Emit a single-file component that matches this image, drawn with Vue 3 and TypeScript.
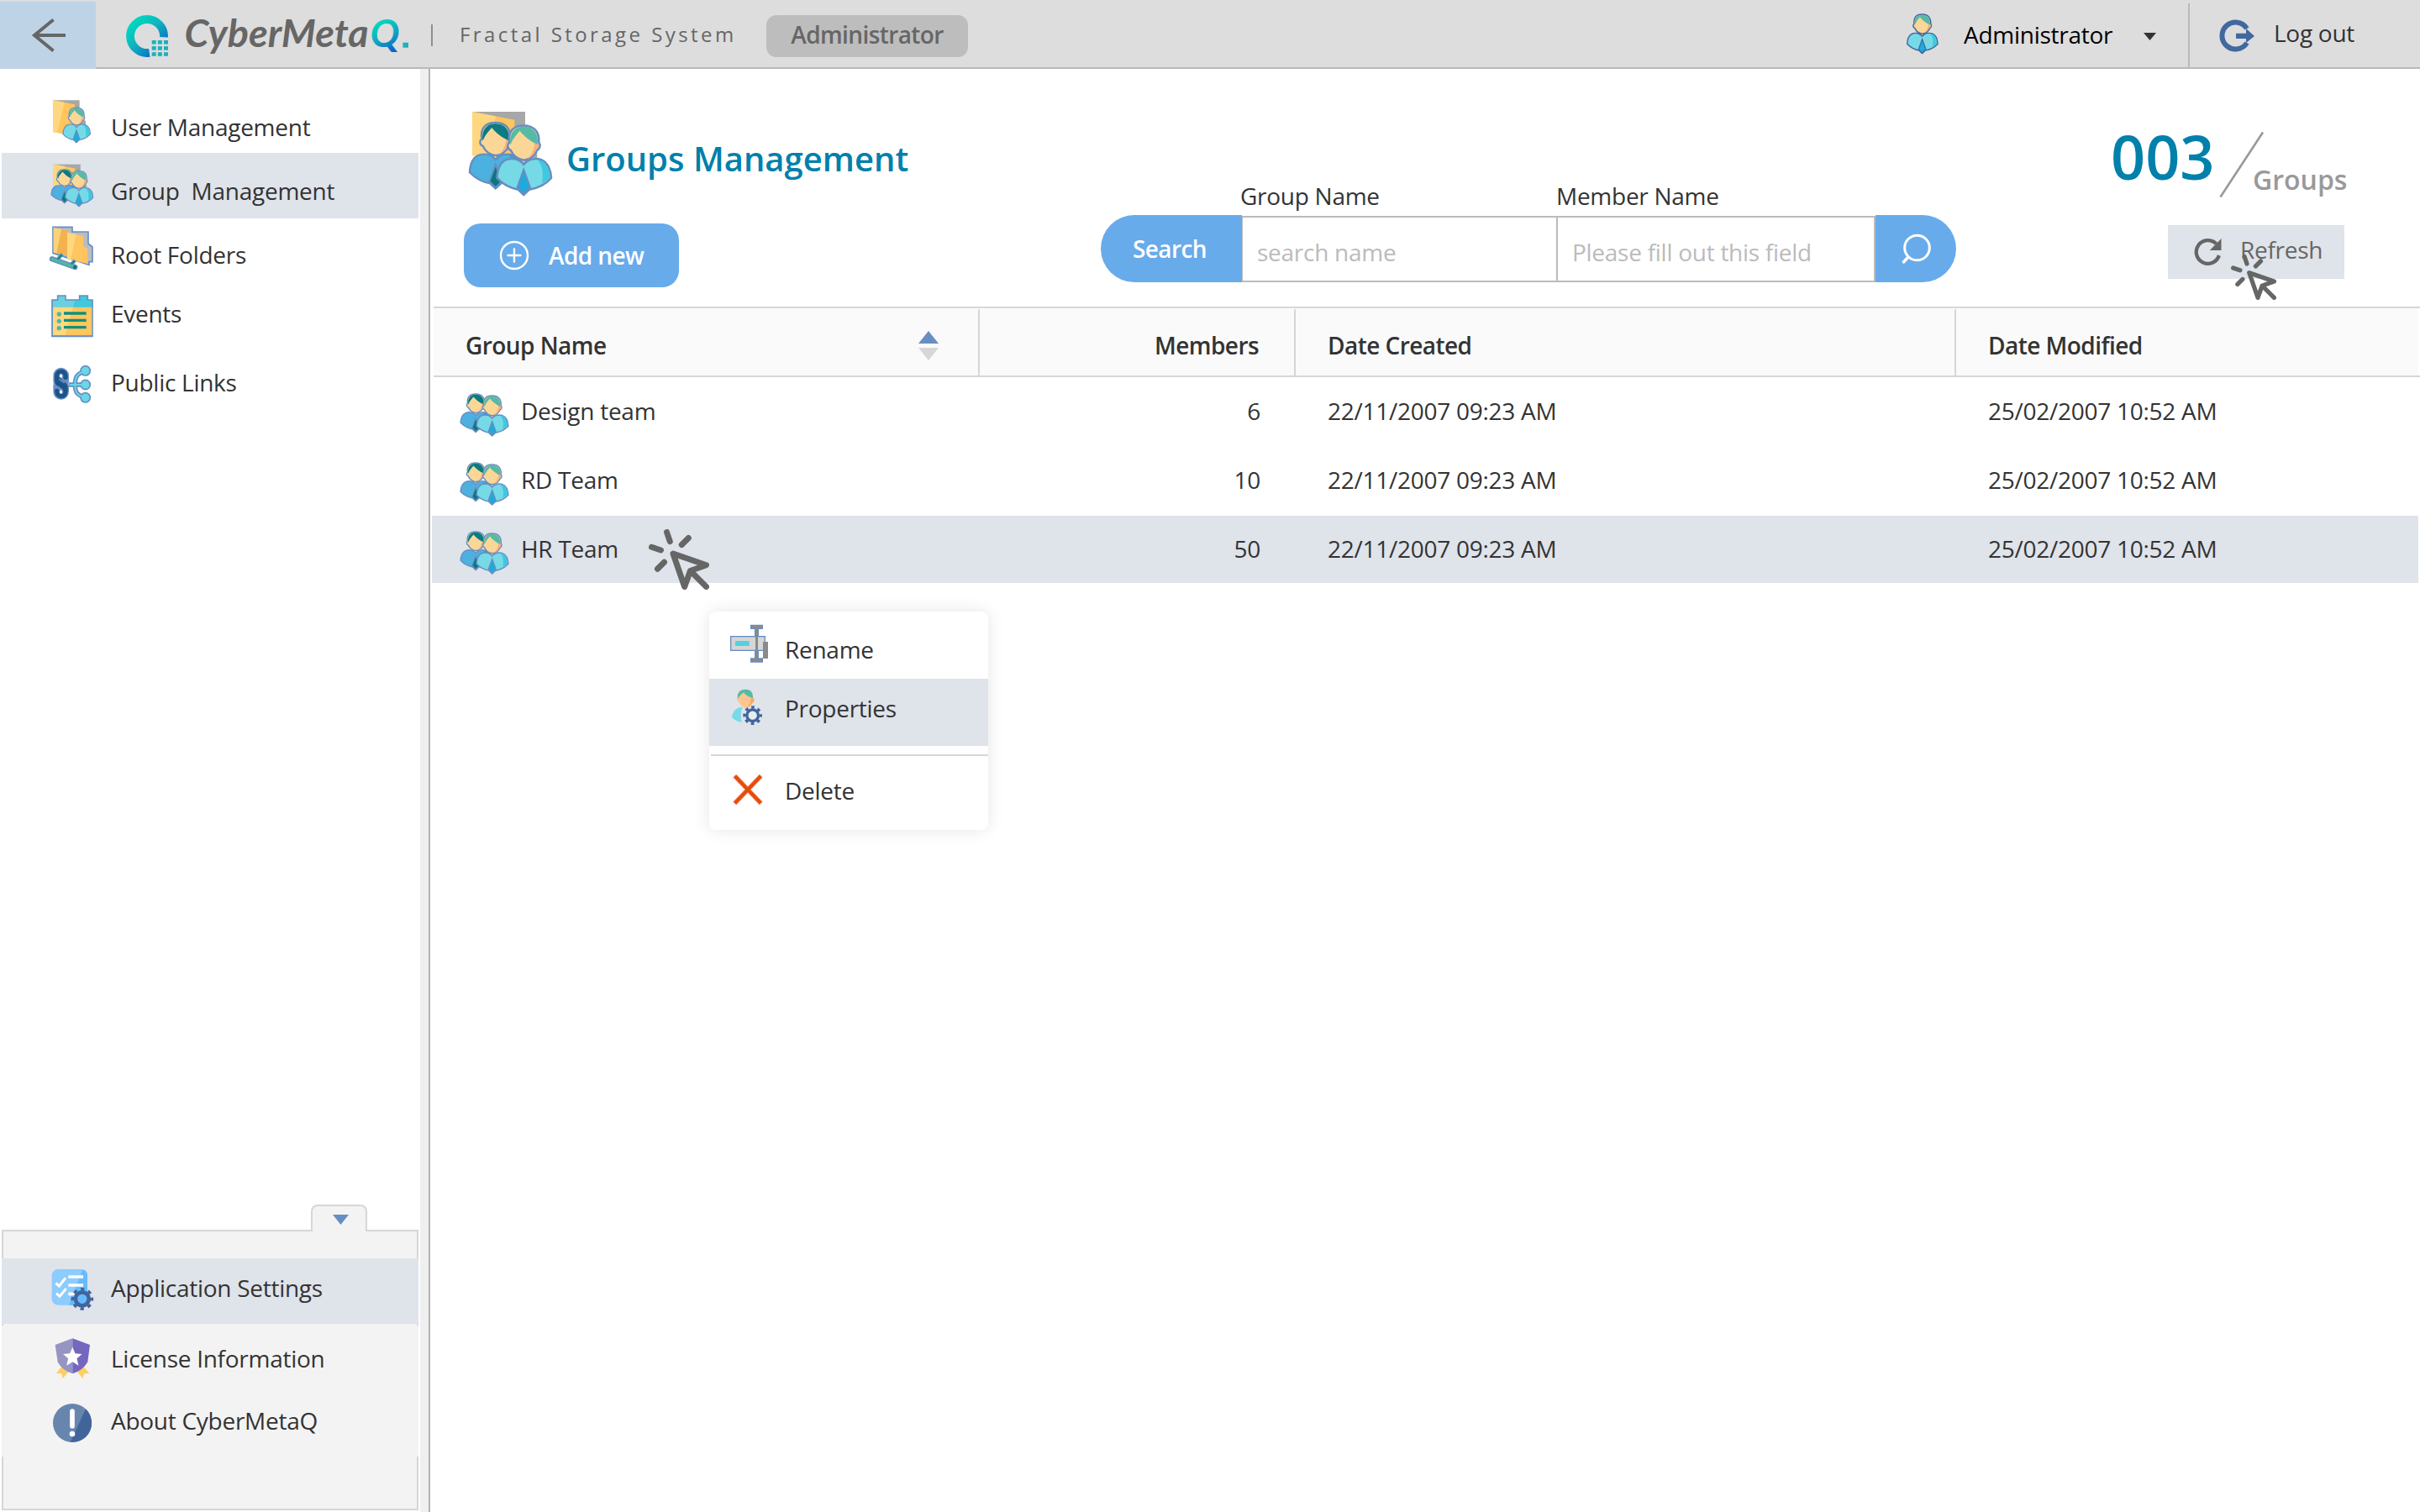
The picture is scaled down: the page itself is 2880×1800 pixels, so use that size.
<script setup lang="ts">
interface NavItem {
  id: string
  label: string
  viewBox: string
  active?: boolean
}

interface GroupRow {
  name: string
  members: number
  created: string
  modified: string
  selected?: boolean
}

const navItems: NavItem[] = [
  { id: 'users', label: 'User Management', viewBox: '168 12 180 234' },
  { id: 'groups', label: 'Group  Management', viewBox: '168 246 180 234', active: true },
  { id: 'roots', label: 'Root Folders', viewBox: '168 480 180 234' },
  { id: 'events', label: 'Events', viewBox: '168 714 180 234' },
  { id: 'links', label: 'Public Links', viewBox: '168 948 180 234' },
]

const footerItems: NavItem[] = [
  { id: 'settings', label: 'Application Settings', viewBox: '168 294 180 234', active: true },
  { id: 'license', label: 'License Information', viewBox: '168 534 180 234' },
  { id: 'about', label: 'About CyberMetaQ', viewBox: '168 768 180 234' },
]

const rows: GroupRow[] = [
  { name: 'Design team', members: 6, created: '22/11/2007 09:23 AM', modified: '25/02/2007 10:52 AM' },
  { name: 'RD Team', members: 10, created: '22/11/2007 09:23 AM', modified: '25/02/2007 10:52 AM' },
  { name: 'HR Team', members: 50, created: '22/11/2007 09:23 AM', modified: '25/02/2007 10:52 AM', selected: true },
]

const logoDots = [0, 1, 2].flatMap((r) => [0, 1, 2].map((c) => ({ x: 30.7 + c * 7.15, y: 30 + r * 7.1 })))
</script>

<template>
  <div class="app">
    <!-- Shared drawings -->
    <svg class="defs" aria-hidden="true">
      <symbol id="person" viewBox="32 0 69 90">
        <g id="person-art">
          <path
            d="M65.7 51 C61 44 52 42.500 45 45 C37 48 34 58 33.500 67 C42 76 51 79.500 59 81 L65.700 87.500 L72.500 81 C82 79.500 91 76 99 67 C98.500 58 95 48 87 45 C80 42.500 71 44 65.700 51Z"
            fill="var(--body)" stroke="currentColor" stroke-width="2.600" stroke-linejoin="round" />
          <path d="M82 45 C89 52 90 62 87.500 73 C92 71 95.500 69 97.500 66.500 C97 58 94 49 87 46Z" fill="var(--shade)" />
          <path d="M65.700 57 L58 78.500 L65.700 86.500 L73.500 78.500Z" fill="var(--tie)" stroke="currentColor" stroke-width="2.200" />
          <path d="M61 44 h9 l-4.300 6z" fill="#fbd797" stroke="currentColor" stroke-width="1.500" />
          <path
            d="M48.500 24 C46.500 11 53 3.700 65.500 3.700 C78 3.700 85 11 84 24 C86.500 27 85.500 31.500 82 33.500 C79 40 73 44.500 66 45.500 C59 44.500 53 40 50 33.500 C45.500 31.500 45.500 27 48.500 24Z"
            fill="#fbd797" stroke="currentColor" stroke-width="2.600" />
          <path d="M83 25 C85 28 84 31 81 32.500 C78.500 38 75 42 70 44.200 C76 38 79 31 78.500 24Z" fill="#fbb07d" />
          <path d="M50 27 C48.300 20 50 5 65.700 5 C78 5 84 14 82.500 26.500 C74 23 66 16.500 61 10 C57 15 52 20 50 27Z" fill="var(--hair)" />
        </g>
      </symbol>
      <symbol id="people" viewBox="-1.500 -1.500 102.500 91" preserveAspectRatio="none">
        <use href="#person-art" class="back" transform="matrix(.97 0 0 .95 -32 -3.300)" />
        <use href="#person-art" class="front" />
      </symbol>
      <symbol id="folder" viewBox="3.700 -13 80 56">
        <path d="M3.700 -13 H67.500 V26 L82 36 V43 H40Z" fill="#a7a7a7" />
        <path d="M3.700 -13 L54.700 -3 V40 H3.700Z" fill="#ffc55f" />
        <path d="M3.700 -13 L32 -7.500 L20 40 H3.700Z" fill="#ffd77f" />
      </symbol>
      <symbol id="click" viewBox="0 0 72 72">
        <g fill="none" stroke="#666" stroke-width="7" stroke-linecap="round" stroke-linejoin="round">
          <path d="M21.500 3.500 L25.300 14.700 M47.300 10.500 L39.300 18.500 M3.500 21.300 L14.500 25 M18.500 39.300 L10.500 47.300" />
          <path d="M29 29 L68.500 42.700 L49.500 49.500 L42.700 68.500Z M51 51 L68.500 68.500" />
        </g>
      </symbol>
    </svg>

    <header class="topbar">
      <button class="back-btn">
        <svg width="114" height="80" viewBox="0 2 114 80">
          <path d="M63.500 23.500 L41 42 L63.500 60.500 M40 42 H78" fill="none" stroke="#666" stroke-width="4" />
        </svg>
      </button>
      <div class="topbar-main">
        <div class="brand">
          <svg width="350" height="80" viewBox="0 -18 350 80">
            <defs>
              <linearGradient id="ring" gradientUnits="userSpaceOnUse" x1="8" y1="8" x2="40" y2="42">
                <stop offset="0" stop-color="#00d8be" />
                <stop offset=".45" stop-color="#10b4bf" />
                <stop offset="1" stop-color="#0a6cc8" />
              </linearGradient>
              <linearGradient id="qfill" gradientUnits="userSpaceOnUse" x1="298" y1="8" x2="318" y2="44">
                <stop offset="0" stop-color="#00dcc0" />
                <stop offset=".5" stop-color="#10a6c4" />
                <stop offset="1" stop-color="#0a62cc" />
              </linearGradient>
            </defs>
            <path d="M45 26.300 A20 20 0 1 0 27.800 44.800" fill="none" stroke="url(#ring)" stroke-width="9.800" />
            <rect v-for="(d, i) in logoDots" :key="i" :x="d.x" :y="d.y" width="5" height="4.600" fill="#1fb0bb" />
            <text x="69.500" y="38" class="brand-text" textLength="219.200" lengthAdjust="spacingAndGlyphs">CyberMeta</text>
            <text x="290.500" y="38" class="brand-q" fill="url(#qfill)">Q</text>
            <rect x="329.400" y="32.700" width="6.600" height="6" fill="#1fb0bb" />
          </svg>
        </div>
        <span class="brand-sep"></span>
        <span class="product">Fractal Storage System</span>
        <span class="role">Administrator</span>
        <div class="account">
          <svg class="front dark-line" width="40" height="50"><use href="#person" width="40" height="50" /></svg>
          <span class="account-name">Administrator</span>
          <svg class="caret" width="15" height="9" viewBox="0 0 15 9"><path d="M0 0H15L7.500 9Z" fill="#333" /></svg>
        </div>
        <div class="logout">
          <svg width="44" height="40" viewBox="2640 22 44 40">
            <path d="M2674 34 A16 16 0 1 0 2674 51" fill="none" stroke="#41689f" stroke-width="6" />
            <path d="M2661 39.700 H2673 V34 L2683 43 L2673 51 V46 H2661Z" fill="#41689f" />
          </svg>
          <span>Log out</span>
        </div>
      </div>
    </header>

    <div class="body">
      <aside class="sidebar">
        <nav class="nav">
          <a v-for="item in navItems" :key="item.id" class="nav-item" :class="[item.id, { active: item.active }]">
            <svg width="60" height="78" :viewBox="item.viewBox">
              <template v-if="item.id === 'users'">
                <path d="M190 58H284V118L306 132V170H230Z" fill="#a7a7a7" />
                <path d="M190 58L267 73V186L190 172Z" fill="#ffc55f" />
                <path d="M190 58L230 66L204 175L190 172Z" fill="#ffd77f" />
                <use href="#person" class="front" x="221" y="79" width="106" height="134" />
              </template>
              <template v-else-if="item.id === 'groups'">
                <use href="#folder" x="190" y="286" width="122" height="86" />
                <use href="#people" x="180" y="302" width="155" height="138" />
              </template>
              <template v-else-if="item.id === 'roots'">
                <path d="M189 511H258V528H315V570L330 582V635H318V646L189 604Z" fill="#b9bcc2" stroke="#678ec2" stroke-width="5" />
                <path d="M191 513L242 524V612L191 602Z" fill="#f2b34e" />
                <path d="M191 513L219 519L202 604L191 602Z" fill="#fbd27a" />
                <path d="M240 530L298 543V578L313 590V642L240 626Z" fill="#ffc55f" />
                <path d="M240 530L272 537L252 628L240 626Z" fill="#ffd77f" />
                <path d="M206 626L222 608M254 644L268 630" stroke="#678ec2" stroke-width="13" />
                <path d="M186 625L268 654" stroke="#678ec2" stroke-width="19" stroke-linecap="round" />
                <path d="M206 626L222 609M254 644L267 631" stroke="#148f77" stroke-width="6" />
                <path d="M186 625L268 654" stroke="#4dbb9f" stroke-width="9" stroke-linecap="round" />
                <circle cx="267" cy="654" r="6" fill="#0b6f78" />
              </template>
              <template v-else-if="item.id === 'events'">
                <path d="M186 771H206V756H234V771H284V756H313V771H330V901H186Z" fill="#3ec9de" stroke="#678ec2" stroke-width="5" />
                <path d="M189 797H328V897H189Z" fill="#ffc55f" />
                <path d="M189 774H209V759H232V774H268L261 797H189Z" fill="#6bd0dd" />
                <path d="M189 797H261L233 897H189Z" fill="#ffd77f" />
                <g fill="#4db8a5"><circle cx="211" cy="822" r="8" /><circle cx="211" cy="847" r="8" /><circle cx="211" cy="872" r="8" /></g>
                <path d="M228 819H308M228 844H308M228 869H308" stroke="#148f77" stroke-width="10" />
              </template>
              <template v-else>
                <path d="M246 1074H300M302 1027C276 1034 268 1045 268 1074C268 1104 278 1112 302 1118" fill="none" stroke="#678ec2" stroke-width="16" />
                <g fill="#68d7e6" stroke="#678ec2" stroke-width="5">
                  <circle cx="305" cy="1024" r="17" /><circle cx="305" cy="1074" r="17" /><circle cx="305" cy="1120" r="17" />
                </g>
                <path d="M248 1074H300M302 1027C276 1034 268 1045 268 1074C268 1104 278 1112 302 1118" fill="none" stroke="#68d7e6" stroke-width="6" />
                <g fill="none" stroke="#678ec2" stroke-width="26">
                  <rect x="203" y="1026" width="30" height="50" rx="15" /><rect x="203" y="1064" width="30" height="50" rx="15" />
                </g>
                <g fill="none" stroke="#1d5488" stroke-width="16" stroke-linecap="round">
                  <path d="M234 1048V1042C234 1021 203 1021 203 1042V1060C203 1080 230 1074 233 1092" />
                  <path d="M203 1096C203 1121 234 1121 234 1098V1082C232 1066 214 1070 212 1056" />
                </g>
                <path d="M206 1080C212 1088 222 1088 224 1100M212 1052C212 1060 224 1060 230 1068" fill="none" stroke="#678ec2" stroke-width="5" />
                <path d="M217 1035l5 5v7h-9v-7zM217 1093l5 6v6h-9v-7z" fill="#fff" />
              </template>
            </svg>
            <span class="nav-label">{{ item.label }}</span>
          </a>
        </nav>

        <div class="dock">
          <div class="dock-tab">
            <svg width="19" height="12" viewBox="0 0 19 12"><path d="M0 0H19L9.500 12Z" fill="#678ec2" /></svg>
          </div>
          <a v-for="item in footerItems" :key="item.id" class="nav-item" :class="[item.id, { active: item.active }]">
            <svg width="60" height="78" :viewBox="item.viewBox">
              <template v-if="item.id === 'settings'">
                <rect x="185" y="333" width="127" height="128" rx="22" fill="#8cccff" />
                <path d="M295 334Q312 338 312 356V461H246Z" fill="#66bbff" />
                <path d="M244 360H297M244 390H297M244 421H266" stroke="#fff" stroke-width="11" />
                <path d="M199 382L211 393L234 364M201 419L213 430L236 402" fill="none" stroke="#fff" stroke-width="9" />
                <circle cx="293.500" cy="439" r="35" fill="none" stroke="#41659b" stroke-width="10" stroke-dasharray="13 14.490" stroke-dashoffset="6.500" />
                <circle cx="293.500" cy="439" r="24" fill="#66bbff" stroke="#41659b" stroke-width="14" />
              </template>
              <template v-else-if="item.id === 'license'">
                <path d="M220 680L201 705L220 706L224 723L244 700ZM298 680L319 705L300 706L296 723L276 700Z" fill="#fbcf63" />
                <path d="M259 580L197 603L206 664Q222 695 259 706Z" fill="#9694c2" />
                <path d="M259 580L321 603L313 664Q296 695 259 706Z" fill="#7367bf" />
                <path d="M259 611L268.500 634L293 636L274.500 652L280.500 677L259 663.500L237.500 677L243.500 652L225 636L249.500 634Z" fill="#fff" />
              </template>
              <template v-else>
                <circle cx="258" cy="882" r="69" fill="#6885ae" />
                <path d="M306 832A69 69 0 0 1 251 950.600Z" fill="#41659b" />
                <path d="M258 840V893" stroke="#fff" stroke-width="17" stroke-linecap="round" />
                <circle cx="258" cy="921" r="10" fill="#fff" />
              </template>
            </svg>
            <span class="nav-label">{{ item.label }}</span>
          </a>
        </div>
      </aside>

      <main class="main">
        <section class="toolbar">
          <div class="lead">
            <div class="heading">
              <svg width="101" height="101" viewBox="-1.500 -13 102.500 102.500" preserveAspectRatio="none">
                <use href="#folder" x="3.700" y="-13" width="80" height="56" />
                <use href="#people" x="-1.500" y="-1.500" width="102.500" height="91" />
              </svg>
              <h1>Groups Management</h1>
            </div>
            <button class="add">
              <svg width="36" height="36" viewBox="0 0 36 36">
                <g fill="none" stroke="#fff" stroke-width="2.400" stroke-linecap="round">
                  <circle cx="18" cy="18" r="16" /><path d="M18 10.500V25.500M10.500 18H25.500" />
                </g>
              </svg>
              <span>Add new</span>
            </button>
          </div>

          <div class="search">
            <span class="label label-group">Group Name</span>
            <span class="label label-member">Member Name</span>
            <button class="search-tag">Search</button>
            <div class="field first">search name</div>
            <div class="field">Please fill out this field</div>
            <button class="search-go">
              <svg width="96" height="80" viewBox="2232 256 96 80">
                <g fill="none" stroke="#fff" stroke-width="3">
                  <circle cx="2281.500" cy="295" r="14.800" /><path d="M2271 306L2264.500 313" stroke-width="3.500" />
                </g>
              </svg>
            </button>
          </div>

          <div class="stats">
            <div class="count">
              <strong>003</strong>
              <svg width="56" height="80" viewBox="0 0 56 80"><path d="M2.500 78.500L53 1.500" stroke="#999" stroke-width="2.600" /></svg>
              <span>Groups</span>
            </div>
            <button class="refresh">
              <svg width="33" height="32" viewBox="365 432 98 96">
                <path d="M454 492A41.500 41.500 0 1 1 444 451" fill="none" stroke="#666" stroke-width="13" />
                <path d="M462 432V474H421Z" fill="#666" />
              </svg>
              <span>Refresh</span>
              <svg class="pointer" width="54" height="54"><use href="#click" width="54" height="54" /></svg>
            </button>
          </div>
        </section>

        <section class="table">
          <div class="thead">
            <div class="thead-cells">
              <div class="th th-name">
                <span>Group Name</span>
                <svg width="24" height="36" viewBox="0 0 24 36">
                  <path d="M12 0L24 15H0Z" fill="#678ec2" /><path d="M0 20H24L12 35Z" fill="#d6d6d6" />
                </svg>
              </div>
              <div class="th th-num">Members</div>
              <div class="th">Date Created</div>
              <div class="th last">Date Modified</div>
            </div>
          </div>
          <div class="rows">
            <div v-for="row in rows" :key="row.name" class="row" :class="{ selected: row.selected }">
              <div class="cell-name">
                <svg width="59" height="52"><use href="#people" width="59" height="52" /></svg>
                <span>{{ row.name }}</span>
              </div>
              <div class="cell-num">{{ row.members }}</div>
              <div class="cell">{{ row.created }}</div>
              <div class="cell">{{ row.modified }}</div>
            </div>
          </div>
        </section>
      </main>
    </div>

    <svg class="row-pointer" width="72" height="72"><use href="#click" width="72" height="72" /></svg>

    <div class="menu">
      <div class="menu-item rename">
        <svg width="60" height="80" viewBox="132 354 180 240">
          <rect x="149" y="443" width="122" height="50" fill="#d6d6d6" stroke="#678ec2" stroke-width="4" />
          <rect x="165" y="459" width="50" height="18" fill="#54d0e2" />
          <path d="M219 401H264V417H249V520H264V536H219V520H234V417H219Z" fill="#678ec2" />
          <path d="M222 404H262V414H246V523H262V533H222V523H237V414H222Z" fill="#8a8a8a" />
          <rect x="234" y="445" width="15" height="46" fill="#d6d6d6" />
          <rect x="237" y="414" width="9" height="108" fill="#8a8a8a" />
          <rect x="264" y="462" width="18" height="60" fill="#8a8a8a" />
        </svg>
        <span>Rename</span>
      </div>
      <div class="menu-item properties">
        <svg width="60" height="80" viewBox="132 594 180 240">
          <path d="M192 696C168 694 155 712 153 732Q166 746 188 750C184 730 184 712 192 696Z" fill="#76dbe6" />
          <path d="M175 660C172 640 184 634 202 634C220 634 230 644 228 664C235 664 235 678 226 680C220 692 208 698 202 698C190 696 180 686 178 676C171 674 171 664 175 660Z" fill="#fdc68f" />
          <path d="M228 664C235 664 235 678 226 680C221 690 214 695 208 697C216 688 221 676 221 662Z" fill="#fba95d" />
          <path d="M174 667C170 645 182 632 202 632C220 632 230 644 228 664C214 660 202 652 195 643C188 650 178 656 174 667Z" fill="#56bba5" />
          <circle cx="227" cy="725" r="29" fill="none" stroke="#41659b" stroke-width="10" stroke-dasharray="11 11.780" stroke-dashoffset="5.500" />
          <circle cx="227" cy="725" r="20.500" fill="#e6ecf2" stroke="#41659b" stroke-width="10" />
        </svg>
        <span>Properties</span>
      </div>
      <div class="menu-line"></div>
      <div class="menu-item delete">
        <svg width="60" height="88" viewBox="132 870 180 264">
          <path d="M163 941L257 1039M257 941L163 1039" stroke="#ff7058" stroke-width="16" />
          <path d="M164 942L256 1038M256 942L164 1038" stroke="#e04f00" stroke-width="10" />
        </svg>
        <span>Delete</span>
      </div>
    </div>
  </div>
</template>

<style>
html,
body {
  margin: 0;
  background: #fff;
}
</style>

<style scoped>
.app {
  position: relative;
  display: flex;
  flex-direction: column;
  width: 2880px;
  height: 1800px;
  overflow: hidden;
  background: #fff;
  color: #333;
  font: 400 28px/38px "Open Sans", "Noto Sans", sans-serif;
  letter-spacing: -0.27px;
}
.defs {
  position: absolute;
  width: 0;
  height: 0;
}
svg {
  display: block;
  flex: none;
}
button {
  border: 0;
  padding: 0;
  font: inherit;
  letter-spacing: inherit;
  color: inherit;
}
.front {
  --body: #76dae6;
  --shade: #3ec9de;
  --tie: #1daadd;
  --hair: #56bba5;
  color: #678ec2;
}
.back {
  --body: #4db1df;
  --shade: #2f9fd6;
  --tie: #0a7880;
  --hair: #0a7b82;
  color: #678ec2;
}
.dark-line {
  color: #41689f;
}

/* Top bar */
.topbar {
  display: flex;
  flex: none;
  height: 82px;
  background: #ddd;
}
.back-btn {
  width: 114px;
  margin-top: 2px;
  background: #bfd3e7;
}
.topbar-main {
  display: flex;
  flex: 1;
  height: 80px;
  border-bottom: 2px solid #b9b9b9;
}
.brand {
  width: 350px;
  margin-left: 36px;
}
.brand-text,
.brand-q {
  font-family: Lato, sans-serif;
  font-size: 46.500px;
  font-style: italic;
  font-weight: 700;
  letter-spacing: 0;
}
.brand-text {
  fill: #666;
}
.brand-sep {
  width: 2px;
  height: 26px;
  margin: 29px 0 0 13px;
  background: #8e8e8e;
}
.product {
  width: 366px;
  margin-left: 32px;
  font-size: 24px;
  line-height: 81px;
  letter-spacing: 3.430px;
  color: #666;
  white-space: nowrap;
}
.role {
  box-sizing: border-box;
  width: 240px;
  height: 50px;
  margin: 18px 0 0 -1px;
  border-radius: 12px;
  background: #bdbdbd;
  color: #666;
  font-weight: 600;
  letter-spacing: -0.600px;
  line-height: 46px;
  text-align: center;
}
.account {
  display: flex;
  margin-left: auto;
  width: 337px;
  border-right: 2px solid #b9b9b9;
  margin-top: 4px;
  height: 76px;
}
.account > svg:first-child {
  margin: 11px 0 0 1px;
}
.account-name {
  margin: -4px 0 0 29px;
  width: 214px;
  color: #000;
  line-height: 82px;
}
.account .caret {
  margin-top: 35px;
}
.logout {
  display: flex;
  width: 274px;
  line-height: 78px;
}
.logout svg {
  margin: 22px 22px 0 34px;
}

/* Sidebar */
.body {
  display: flex;
  flex: 1;
  min-height: 0;
}
.sidebar {
  box-sizing: border-box;
  display: flex;
  flex-direction: column;
  justify-content: space-between;
  width: 512px;
  padding: 22px 0 2px 2px;
  border-right: 2px solid #b3b3b3;
  background: linear-gradient(#efefef, #efefef) right / 10px 100% no-repeat;
}
.nav,
.dock {
  width: 496px;
}
.nav-item {
  display: flex;
  height: 78px;
}
.nav-item svg {
  margin-left: 54px;
}
.nav-item.active {
  background: #dfe3ea;
}
.nav-label {
  margin-left: 16px;
  white-space: pre;
}
.users .nav-label { padding-top: 28px; }
.groups .nav-label { padding-top: 26px; }
.roots .nav-label { padding-top: 24px; }
.events .nav-label { padding-top: 16px; }
.links .nav-label { padding-top: 20px; }
.settings .nav-label { padding-top: 16px; }
.license .nav-label { padding-top: 20px; }
.about .nav-label { padding-top: 16px; }
.dock {
  position: relative;
  box-sizing: border-box;
  height: 334px;
  padding-top: 32px;
  border: 2px solid #d6d6d6;
  background: #f3f3f3;
}
.dock .nav-item {
  margin: 0 -2px;
  background: #f3f3f3;
}
.dock .nav-item.settings {
  margin-bottom: 2px;
  background: #dfe3ea;
}
.dock-tab {
  position: absolute;
  box-sizing: border-box;
  left: 366px;
  top: -32px;
  width: 67px;
  height: 32px;
  padding: 10px 0 0 24px;
  border: 2px solid #d6d6d6;
  border-bottom: 0;
  border-radius: 8px 8px 0 0;
  background: #f3f3f3;
}

/* Main */
.main {
  flex: 1;
  min-width: 0;
}
.toolbar {
  display: flex;
  align-items: flex-start;
  height: 283px;
}
.lead {
  width: 758px;
  margin-left: 40px;
}
.heading {
  display: flex;
  height: 133px;
  padding: 51px 0 0 5px;
}
h1 {
  margin: 28px 0 0 16px;
  font-size: 40px;
  line-height: 56px;
  font-weight: 600;
  letter-spacing: 0;
  color: #0080ab;
  white-space: nowrap;
}
.add {
  display: flex;
  align-items: center;
  width: 256px;
  height: 76px;
  border-radius: 20px;
  background: #67abeb;
  color: #fff;
  font-weight: 600;
  letter-spacing: -0.600px;
}
.add svg {
  margin: 0 23px 0 42px;
}
.add span {
  margin-top: -1px;
}
.search {
  display: grid;
  grid-template-columns: 168px 375px 379px 96px;
  grid-template-rows: 42px 80px;
  margin-top: 132px;
}
.label {
  margin-left: -2px;
}
.label-group {
  grid-column: 2;
}
.label-member {
  grid-column: 3 / 5;
  margin-left: -1px;
}
.search-tag {
  padding-right: 4px;
  border-radius: 40px 0 0 40px;
  background: #67abeb;
  color: #fff;
  font-weight: 600;
  letter-spacing: -0.600px;
  line-height: 78px;
}
.field {
  box-sizing: border-box;
  height: 79px;
  margin: 1px 0 0 -1px;
  padding-left: 17px;
  border: 2px solid #bbb;
  color: #bbb;
  line-height: 82px;
  white-space: nowrap;
}
.field.first {
  margin-left: 0;
  border-left-width: 1px;
  border-right: 0;
}
.search-go {
  border-radius: 0 40px 40px 0;
  background: #67abeb;
}
.stats {
  margin-left: 184px;
}
.count {
  display: flex;
  height: 131px;
  padding-top: 55px;
}
.count strong {
  width: 128px;
  font-size: 72px;
  line-height: 98px;
  font-weight: 600;
  letter-spacing: 0;
  color: #0080ab;
}
.count svg {
  margin-top: 19px;
}
.count span {
  margin: 55px 0 0 -15px;
  font-size: 32px;
  line-height: 44px;
  font-weight: 600;
  letter-spacing: 0;
  color: #999;
}
.refresh {
  position: relative;
  display: flex;
  width: 210px;
  height: 64px;
  margin-left: 68px;
  background: #dfe3ea;
  color: #666;
}
.refresh > svg:first-child {
  margin: 16px 22px 0 31px;
}
.refresh span {
  line-height: 58px;
}
.pointer {
  position: absolute;
  left: 75px;
  top: 35px;
}

/* Table */
.thead {
  height: 80px;
  margin-left: 4px;
  border-top: 2px solid #d6d6d6;
  border-bottom: 2px solid #d6d6d6;
}
.thead-cells,
.row {
  display: grid;
  grid-template-columns: 650px 376px 786px 1fr;
}
.thead-cells {
  width: 2362px;
  height: 79px;
  margin-top: 1px;
  background: #fafafa;
  font-weight: 600;
  letter-spacing: -0.550px;
  line-height: 87px;
}
.th {
  box-sizing: border-box;
  height: 81px;
  padding-left: 38px;
  border-right: 2px solid #d6d6d6;
}
.th.last {
  border-right: 0;
}
.th-name {
  display: flex;
  justify-content: space-between;
  padding-right: 47px;
}
.th-name svg {
  margin-top: 26px;
}
.th-num {
  padding-right: 42px;
  text-align: right;
}
.rows {
  display: flex;
  flex-direction: column;
  gap: 2px;
  padding: 1px 0 0 2px;
}
.row {
  width: 2364px;
  height: 80px;
  grid-template-columns: 652px 376px 786px 1fr;
  line-height: 78px;
}
.row.selected {
  background: #dfe3ea;
}
.cell-name {
  display: flex;
}
.cell-name svg {
  margin: 18px 14px 0 33px;
}
.cell-num {
  padding-right: 42px;
  text-align: right;
}
.cell {
  padding-left: 38px;
}

/* Floating layers */
.row-pointer {
  position: absolute;
  left: 772px;
  top: 630px;
}
.menu {
  position: absolute;
  left: 844px;
  top: 728px;
  width: 332px;
  height: 260px;
  border-radius: 8px;
  background: #fff;
  box-shadow: 0 0 20px rgba(0, 0, 0, 0.1);
}
.menu-item {
  display: flex;
  height: 80px;
}
.menu-item svg {
  margin: 0 10px 0 20px;
}
.menu-item.rename span { padding-top: 26px; }
.menu-item.properties { background: #dfe3ea; }
.menu-item.properties span { padding-top: 16px; }
.menu-item.delete { height: 88px; }
.menu-item.delete span { padding-top: 22px; }
.menu-line {
  height: 2px;
  margin: 10px 0 0 2px;
  background: #d6d6d6;
}
</style>
